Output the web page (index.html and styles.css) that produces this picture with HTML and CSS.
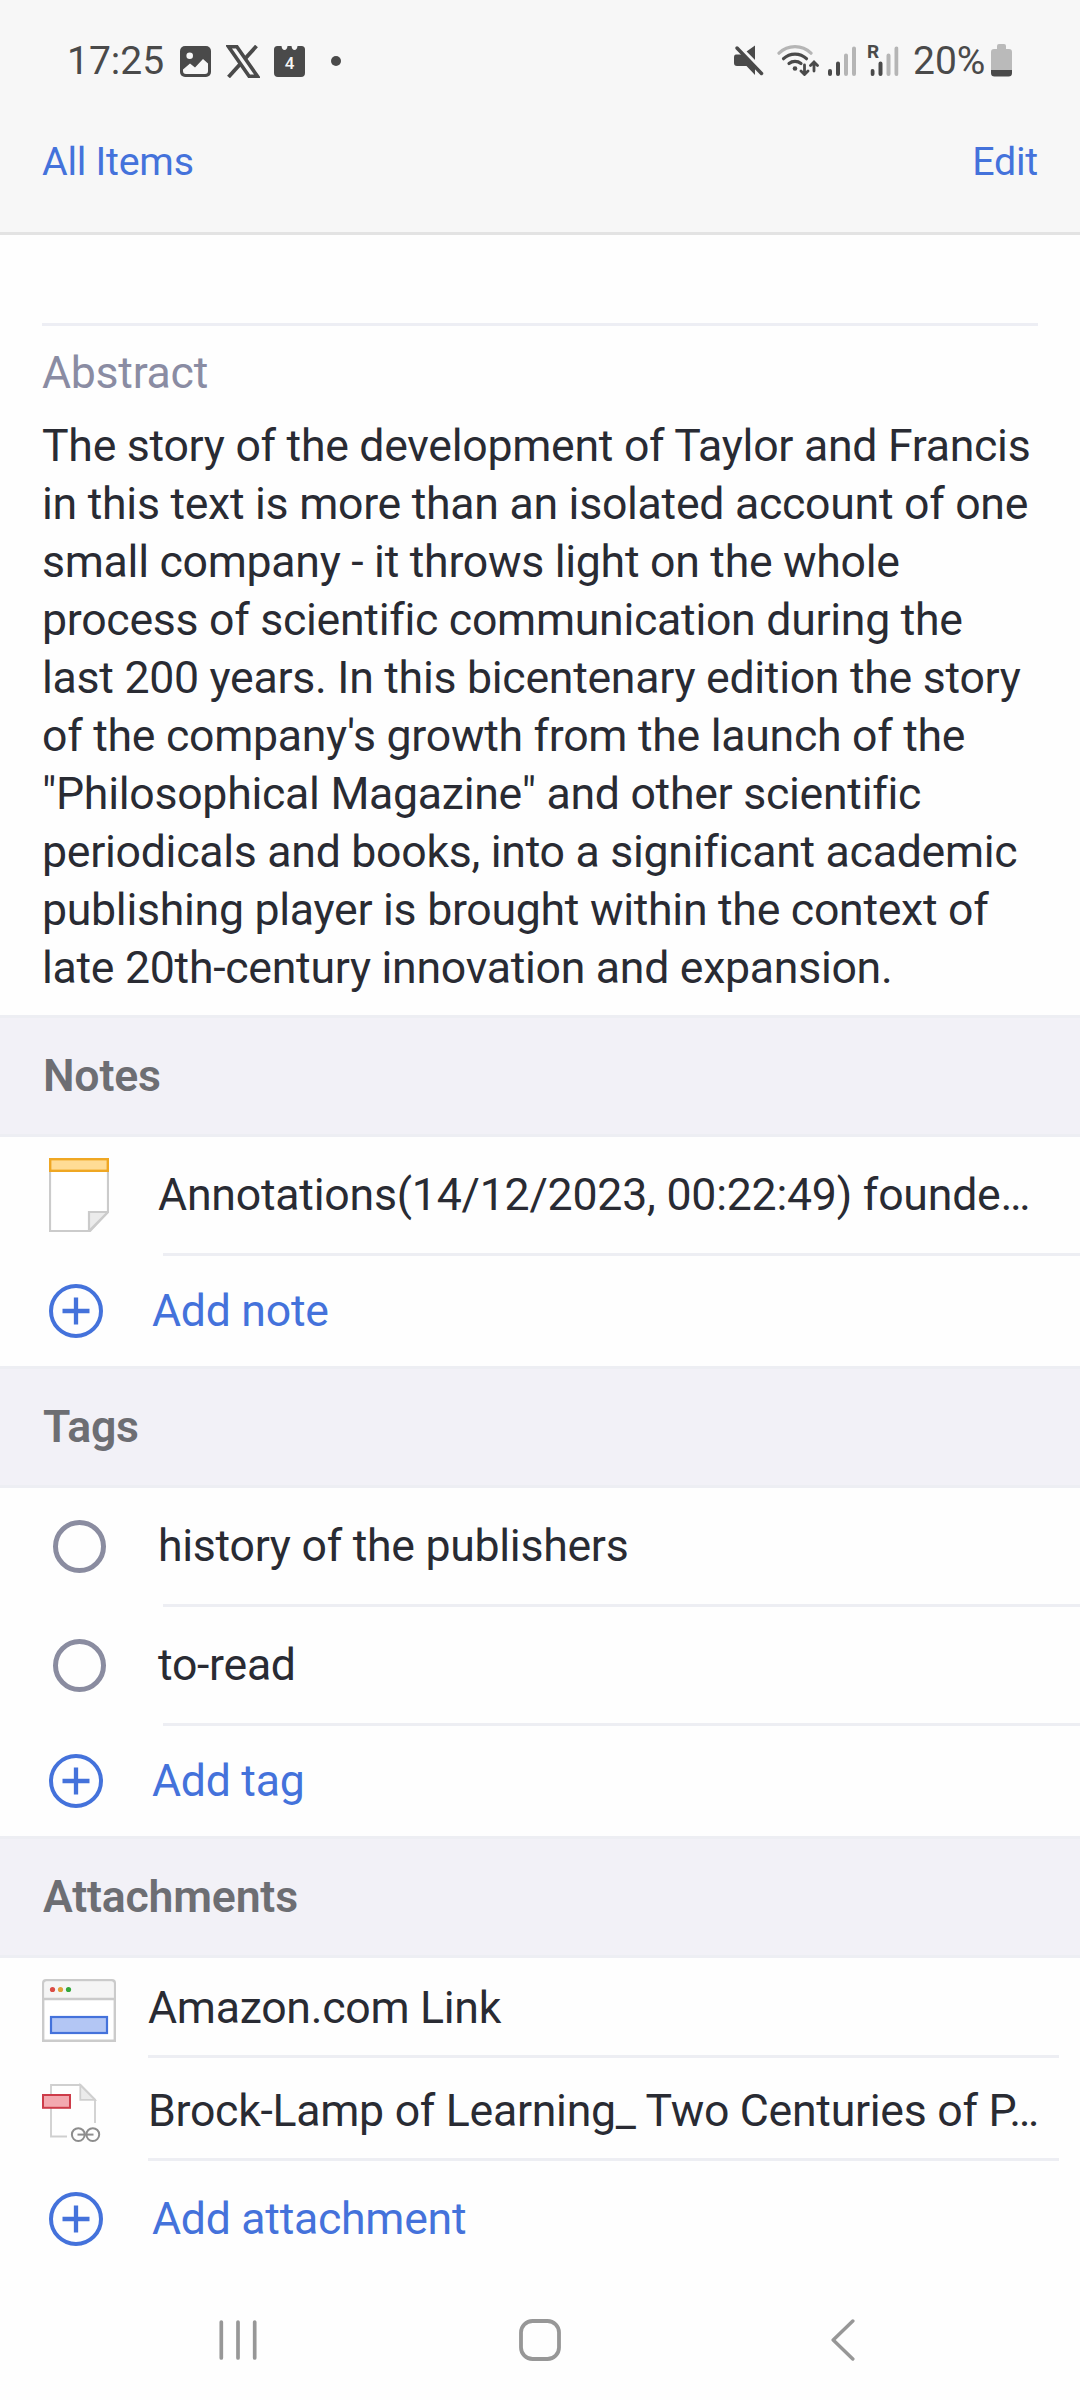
FILE: index.html
```html
<!DOCTYPE html>
<html lang="en">
<head>
<meta charset="utf-8">
<title>Item details</title>
<link rel="stylesheet" href="styles.css">
</head>
<body>
<svg class="defs" width="0" height="0">
  <symbol id="plus" viewBox="0 0 54 54"><circle cx="27" cy="27" r="25" fill="none" stroke="currentColor" stroke-width="4"/><path d="M27 13.5v27M13.5 27h27" stroke="currentColor" stroke-width="4.300"/></symbol>
  <symbol id="bars" viewBox="0 0 28 30"><g fill="none" stroke-width="4" stroke-linecap="round"><path stroke="#4a4a4a" d="M2 25v3M10 17.5V28"/><path stroke="#b5b5b5" d="M18 9.500V28M26 2.500V28"/></g></symbol>
</svg>
<div class="screen">
  <header class="header">
    <div class="status">
      <span class="clock">17:25</span>
      <svg class="picture" width="31" height="31" viewBox="0 0 31 31"><rect width="31" height="31" rx="5" fill="#4a4a4a"/><circle cx="9.700" cy="9.700" r="3.300" fill="#f7f7f7"/><path d="M3 23.500l7-6 5 4L23 13l5 4.500V25q0 3-3 3H6q-3 0-3-3z" fill="#f7f7f7"/></svg>
      <svg class="x-logo" width="34" height="33" viewBox="0 0 34 33"><path d="M30.500 1L2.500 32" stroke="#4a4a4a" stroke-width="3.800"/><path d="M2.600 1.800h8.300L31.400 31.200h-8.300z" fill="#f7f7f7" stroke="#4a4a4a" stroke-width="3.600"/></svg>
      <svg class="calendar" width="31" height="31" viewBox="0 0 31 31"><path d="M3.500 0H7.500q.5 4 3 4t3-4h4q.5 4 3 4t3-4h4q3.500 0 3.500 3.500V27q0 4-4 4H4q-4 0-4-4V3.500Q0 0 3.500 0z" fill="#4a4a4a"/><text x="15.500" y="23.200" text-anchor="middle" class="day">4</text></svg>
      <span class="more"></span>
      <svg class="mute" width="30" height="31" viewBox="0 0 30 31"><path d="M12.500 6.500L21 .5V15zM2 9.500h6L21 22v8L12.500 21H3q-3 0-3-3v-5.500q0-3 2-3z" fill="#4a4a4a"/><path d="M5.500 1.500l24 25" stroke="#f7f7f7" stroke-width="3"/><path d="M3 3l24.500 25.500" stroke="#4a4a4a" stroke-width="3.500" stroke-linecap="round"/></svg>
      <svg class="wifi" width="42" height="32" viewBox="0 0 42 32"><g fill="none" stroke-width="3.200" stroke-linecap="round"><path stroke="#b5b5b5" d="M2 9.200a23 23 0 0 1 32 0"/><g stroke="#4a4a4a"><path d="M6.500 14.700a16.500 16.500 0 0 1 23 0M12 19.500a9.500 9.500 0 0 1 12 0"/><path stroke-width="2.800" d="M27.500 21v9M24 27l3.500 3.500L31 27M37 27v-8.500M33.500 21.500L37 18l3.500 3.500"/></g></g><circle cx="18" cy="24.500" r="2.300" fill="#4a4a4a"/></svg>
      <svg class="signal" width="28" height="30"><use href="#bars"/></svg>
      <svg class="roaming" width="34" height="38" viewBox="-1 -6 34 38"><text x="0" y="14" class="roam">R</text><use href="#bars" x="3.500" y="2" width="28" height="30"/></svg>
      <span class="percent">20%</span>
      <svg class="battery" width="21" height="33" viewBox="0 0 21 33"><path d="M6 2q0-2 2-2h5q2 0 2 2v3h3q3 0 3 3v19H0V8q0-3 3-3h3z" fill="#bababa"/><path d="M0 26h21v3q0 3.500-3.500 3.500h-14Q0 32.500 0 29z" fill="#4a4a4a"/></svg>
    </div>
    <nav class="toolbar"><a>All Items</a><a>Edit</a></nav>
  </header>

  <main>
    <section class="abstract">
      <h2>Abstract</h2>
      <p>The story of the development of Taylor and Francis<br>in this text is more than an isolated account of one<br>small company - it throws light on the whole<br>process of scientific communication during the<br>last 200 years. In this bicentenary edition the story<br>of the company's growth from the launch of the<br>"Philosophical Magazine" and other scientific<br>periodicals and books, into a significant academic<br>publishing player is brought within the context of<br>late 20th-century innovation and expansion.</p>
    </section>

    <h3 class="group">Notes</h3>
    <div class="row">
      <svg class="note" width="60" height="74" viewBox="0 0 60 74"><path d="M1 12v61h40l18-19V12" fill="#fff" stroke="#cbcbcb" stroke-width="2.200"/><path d="M40 73V54h19z" fill="#ebebeb" stroke="#cbcbcb" stroke-width="2.200"/><rect x="1.200" y="1.200" width="57.600" height="11.600" fill="#ffdc95" stroke="#efa723" stroke-width="2.400"/></svg>
      <span class="label annotation">Annotations(14/12/2023, 00:22:49) founde…</span>
    </div>
    <div class="add"><svg width="54" height="54"><use href="#plus"/></svg><span>Add note</span></div>

    <h3 class="group">Tags</h3>
    <div class="row"><span class="dot"></span><span class="label">history of the publishers</span></div>
    <div class="row"><span class="dot"></span><span class="label">to-read</span></div>
    <div class="add"><svg width="54" height="54"><use href="#plus"/></svg><span>Add tag</span></div>

    <h3 class="group">Attachments</h3>
    <div class="file first">
      <svg width="74" height="63" viewBox="0 0 74 63"><path d="M1.200 61.800V4q0-2.800 2.800-2.800h66q2.800 0 2.800 2.800v57.800z" fill="#fff" stroke="#cbcbcb" stroke-width="2.400"/><path d="M2.400 5q0-2.600 2.600-2.600h64q2.600 0 2.600 2.600v14H2.400z" fill="#f5f5f5"/><path d="M1 20h72" stroke="#cbcbcb" stroke-width="2.400"/><circle cx="10.500" cy="10.500" r="2.600" fill="#db4c45"/><circle cx="18.500" cy="10.500" r="2.600" fill="#dfa13a"/><circle cx="26.500" cy="10.500" r="2.600" fill="#33a83c"/><rect x="9" y="38" width="56" height="16" fill="#b3c6f4" stroke="#4472db" stroke-width="2.200"/></svg>
      <span class="label">Amazon.com Link</span>
    </div>
    <div class="file">
      <svg width="74" height="63" viewBox="0 0 74 63"><path d="M25 54.500H9V3h29.500L53 17.500v23.500" fill="none" stroke="#cfcfcf" stroke-width="1.800"/><path d="M38.300 3v14.800H53z" fill="#ebebeb" stroke="#cfcfcf" stroke-width="1.800"/><rect x="1" y="13" width="27" height="12.800" fill="#f3a9b0" stroke="#cd3b49" stroke-width="2"/><g fill="none" stroke="#8d8d8d" stroke-width="2"><circle cx="36.300" cy="52.600" r="6.400"/><circle cx="50.800" cy="52.600" r="6.400"/><path d="M35.500 52.600h16"/></g></svg>
      <span class="label">Brock-Lamp of Learning_ Two Centuries of P…</span>
    </div>
    <div class="add last"><svg width="54" height="54"><use href="#plus"/></svg><span>Add attachment</span></div>
  </main>

  <footer class="nav">
    <svg width="38" height="42" viewBox="0 0 38 42"><path d="M2.300 3v36M19 3v36M35.700 3v36" stroke="#979797" stroke-width="3.700" stroke-linecap="round"/></svg>
    <svg class="home" width="42" height="42" viewBox="0 0 42 42"><rect x="2" y="2" width="38" height="38" rx="11.500" fill="none" stroke="#979797" stroke-width="3.800"/></svg>
    <svg class="back" width="24" height="42" viewBox="0 0 24 42"><path d="M21.800 2L2.200 21l19.600 19" fill="none" stroke="#979797" stroke-width="3.500" stroke-linecap="round" stroke-linejoin="round"/></svg>
  </footer>
</div>
</body>
</html>
```
FILE: styles.css
```css
* { box-sizing: border-box; }
body { margin: 0; background: #fdfdfd; font: 400 44.625px/58px Roboto, sans-serif; letter-spacing: -.28px; color: #292b33; }
h2, h3, p { margin: 0; font-size: inherit; font-weight: 400; }
svg { display: block; flex: none; }
.defs { position: absolute; }
.screen { width: 1080px; height: 2400px; display: flex; flex-direction: column; background: #fefefe; }

.header { height: 235px; background: #f7f7f7; border-bottom: 3px solid #e3e3e3; }
.status { height: 120px; padding: 44px 67px 0 67px; display: flex; align-items: flex-start; color: #4a4a4a; font-size: 39px; line-height: 34px; letter-spacing: 0; }
.clock { width: 113px; }
.picture { margin-top: 2px; }
.x-logo { margin: 1px 0 0 15px; }
.calendar { margin: 2px 0 0 14px; }
.day { font: 500 17px Roboto, sans-serif; fill: #f7f7f7; }
.more { width: 10px; height: 10px; margin: 12px auto 0 26px; border-radius: 50%; background: #4a4a4a; }
.mute { margin-top: 1px; }
.wifi { margin-left: 13px; }
.signal { margin: 2px 0 0 9px; }
.roaming { margin: -6px 0 0 10px; overflow: visible; }
.roam { font: 700 19px Roboto, sans-serif; fill: #4a4a4a; }
.percent { width: 78px; margin-left: 13px; }
.battery { margin-right: 1px; }
.toolbar { padding: 18px 42px 0; height: 112px; display: flex; justify-content: space-between; line-height: 48px; font-size: 39.375px; letter-spacing: -.24px; color: #4472db; }

.abstract { margin: 88px 42px 0; padding: 18px 0; border-top: 3px solid #edeef4; height: 692px; white-space: nowrap; }
.abstract h2 { color: #8a8ca3; margin-bottom: 15px; }
.group { height: 122px; padding-left: 43px; border: solid #edeef3; border-width: 3px 0; background: #f2f1f7; color: #6d6e73; font-weight: 600; letter-spacing: -.2px; line-height: 116px; }

.row { height: 119px; display: flex; align-items: center; }
.row .label { flex: 1; height: 119px; line-height: 116px; border-bottom: 3px solid #edeef3; text-indent: -5px; white-space: nowrap; }
.row .annotation { letter-spacing: -.22px; }
.note { margin: 0 54px 3px 49px; }
.dot { width: 53px; height: 53px; margin: 0 57px 3px 53px; border: 5.500px solid #8a8ca0; border-radius: 50%; }
.add { height: 110px; padding-left: 49px; display: flex; align-items: center; gap: 49px; color: #4472db; }
.last { margin-top: 3px; }

.file { height: 103px; padding: 0 21px 0 42px; display: flex; align-items: flex-end; gap: 32px; }
.file.first { height: 100px; }
.file svg { margin-bottom: 16px; }
.file .label { flex: 1; height: 98px; line-height: 97px; border-bottom: 3px solid #edeef3; white-space: nowrap; }

.nav { margin-top: auto; height: 81px; padding: 0 225px 0 219px; display: flex; align-items: flex-start; }
.home { margin-left: 262px; }
.back { margin-left: auto; }
```
